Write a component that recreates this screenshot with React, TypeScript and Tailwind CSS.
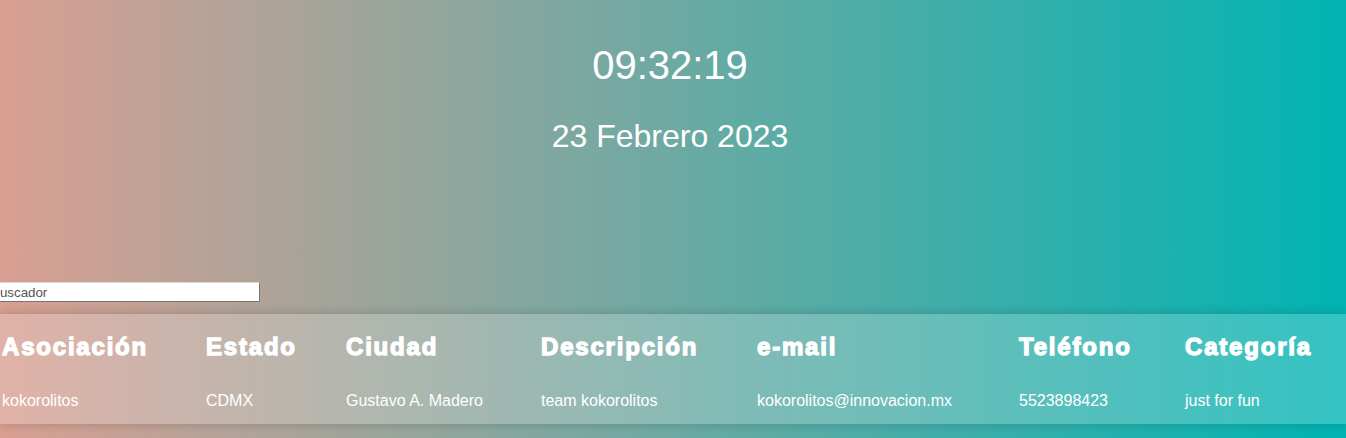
import { useState } from "react";

// fila de ejemplo, la tabla solo tiene una asociacion
const columnas = ["Asociación", "Estado", "Ciudad", "Descripción", "e-mail", "Teléfono", "Categoría"];

const filas = [
  ["kokorolitos", "CDMX", "Gustavo A. Madero", "team kokorolitos", "kokorolitos@innovacion.mx", "5523898423", "just for fun"],
];

export default function App() {
  const [busqueda, setBusqueda] = useState("");

  return (
    <div className="min-h-screen h-[438px] w-full overflow-hidden bg-[linear-gradient(to_right,#d99f92,#00b4b3)] font-['Liberation_Sans',Arial,sans-serif] text-white">
      {/* reloj */}
      <div className="flex flex-col items-center pt-[42px] pr-[6px]">
        <div className="text-[40px] leading-[46px]">09:32:19</div>
        <div className="mt-[30px] text-[32px] leading-[37px]">23 Febrero 2023</div>
      </div>

      {/* buscador */}
      <div className="mt-[127px] ml-[-12px]">
        <input
          value={busqueda}
          onChange={(e) => setBusqueda(e.target.value)}
          placeholder="Buscador"
          className="block h-[20px] w-[272px] border border-t-[#d8d8d8] border-l-[#d8d8d8] border-r-[#767676] border-b-[#767676] bg-white px-[2px] text-[13.33px] text-black outline-none placeholder:text-[#545454]"
        />
      </div>

      {/* tabla */}
      <div className="mt-[12px] bg-white/20 pt-[19px] pb-[14px] pl-[2px] shadow-[0_0_10px_rgba(0,0,0,0.18)]">
        <div className="grid grid-cols-[204px_140px_195px_216px_262px_166px_1fr]">
          {columnas.map((c) => (
            <div
              key={c}
              className="text-[24px] leading-[28px] font-bold tracking-[1.8px] [-webkit-text-stroke:1.3px_white]"
            >
              {c}
            </div>
          ))}
          {filas.map((f) =>
            f.map((v, i) => (
              <div key={i} className="mt-[31px] text-[16px] leading-[18px]">
                {v}
              </div>
            ))
          )}
        </div>
      </div>
    </div>
  );
}
